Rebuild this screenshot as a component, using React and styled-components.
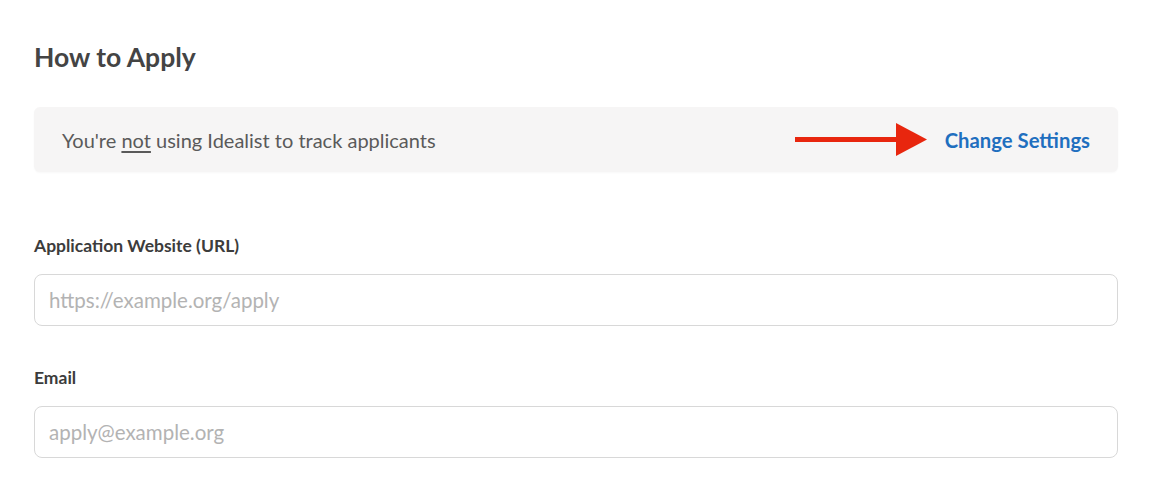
import React from "react";
import styled, { createGlobalStyle } from "styled-components";

const GlobalStyle = createGlobalStyle`
  body {
    margin: 0;
    background: #ffffff;
    font-family: "Source Sans Pro", Lato, "Liberation Sans", sans-serif;
  }
`;

const Page = styled.div`
  padding: 40px 32px 0 34px;
`;

const Heading = styled.h2`
  margin: 0;
  font-size: 26.5px;
  line-height: 34px;
  font-weight: 700;
  color: #444444;
`;

const Banner = styled.div`
  margin-top: 33px;
  height: 65px;
  box-sizing: border-box;
  padding: 0 28px;
  display: flex;
  align-items: center;
  justify-content: space-between;
  background: #f6f5f5;
  border-radius: 6px;
  box-shadow: 0 1px 2px rgba(0, 0, 0, 0.03);
`;

const Notice = styled.span`
  font-size: 20px;
  color: #5a5a5a;
  u {
    text-underline-offset: 3px;
  }
`;

const Actions = styled.div`
  display: flex;
  align-items: center;
  gap: 18px;
`;

const Link = styled.a`
  font-size: 20.3px;
  font-weight: 700;
  color: #1f6fbf;
  text-decoration: none;
  cursor: pointer;
`;

const Field = styled.div`
  margin-top: ${(p) => p.$gap}px;
  display: flex;
  flex-direction: column;
  gap: 18px;
`;

const Label = styled.label`
  font-size: 17.5px;
  line-height: 20px;
  font-weight: 700;
  color: #3c3c3c;
`;

const Input = styled.input`
  box-sizing: border-box;
  height: 52px;
  width: 100%;
  padding: 0 14px;
  border: 1px solid #d8d8d8;
  border-radius: 8px;
  font-family: inherit;
  font-size: 20.5px;
  color: #333;
  outline: none;
  &::placeholder {
    color: #b3b3b3;
  }
`;

function Arrow() {
  return (
    <svg width="132" height="34" viewBox="0 0 132 34">
      <rect x="0" y="14" width="104" height="5" fill="#e8260e" />
      <polygon points="101,0 132,16.5 101,33" fill="#e8260e" />
    </svg>
  );
}

export default function App() {
  return (
    <>
      <GlobalStyle />
      <Page>
        <Heading>How to Apply</Heading>
        <Banner>
          <Notice>
            You're <u>not</u> using Idealist to track applicants
          </Notice>
          <Actions>
            <Arrow />
            <Link>Change Settings</Link>
          </Actions>
        </Banner>
        <Field $gap={64}>
          <Label>Application Website (URL)</Label>
          <Input placeholder="https://example.org/apply" />
        </Field>
        <Field $gap={42}>
          <Label>Email</Label>
          <Input placeholder="apply@example.org" />
        </Field>
      </Page>
    </>
  );
}
